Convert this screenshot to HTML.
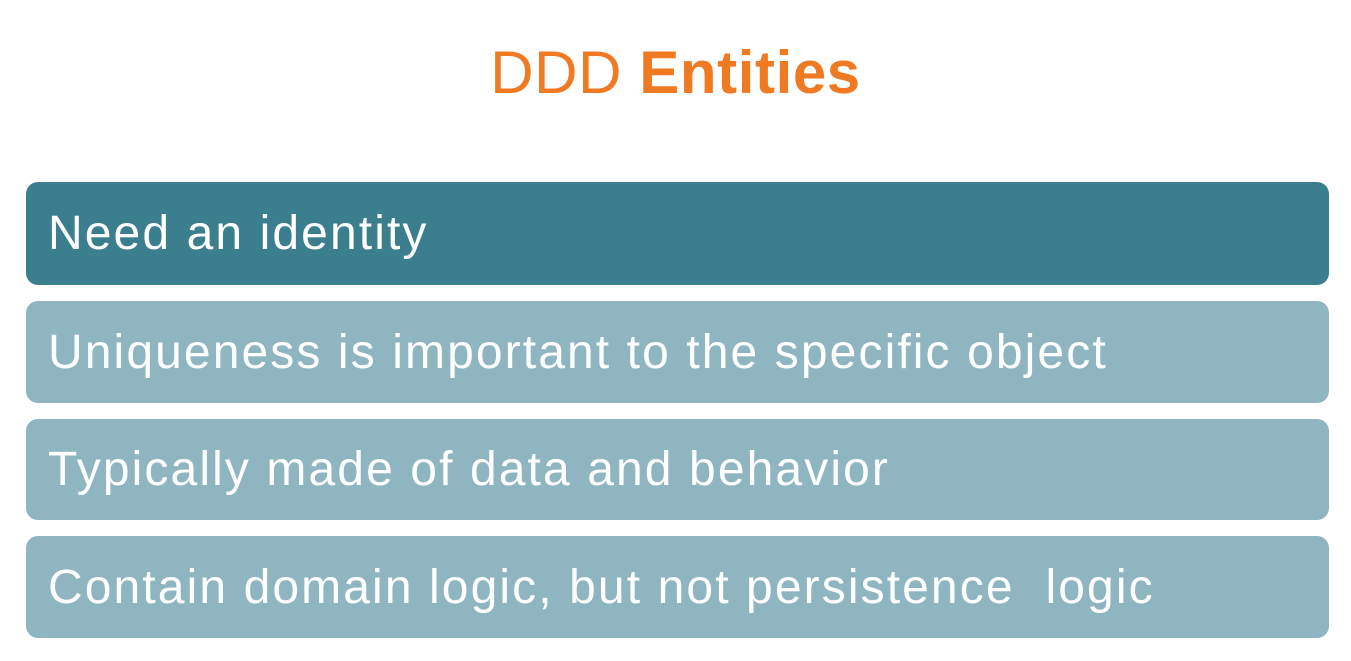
<!DOCTYPE html>
<html><head><style>
body{margin:0;width:1351px;height:661px;background:#fff;font-family:"Liberation Sans",sans-serif;overflow:hidden;position:relative}
h1{position:absolute;top:38px;left:0;width:1351px;text-align:center;margin:0;font-size:60px;font-weight:normal;color:#f07a22;letter-spacing:0.6px}
h1 b{font-weight:bold}
.r{position:absolute;left:26px;width:1303px;border-radius:12px;background:#8fb6c0;color:#fff;font-size:48px;box-sizing:border-box;padding-left:22px;display:flex;align-items:center;letter-spacing:2.1px}
.d{background:#3b7f8f}
</style></head><body>
<h1>DDD <b>Entities</b></h1>
<div class="r d" style="top:182px;height:103px">Need an identity</div>
<div class="r" style="top:301px;height:102px">Uniqueness is important to the specific object</div>
<div class="r" style="top:419px;height:101px">Typically made of data and behavior</div>
<div class="r" style="top:536px;height:102px">Contain domain logic, but not persistence&nbsp; logic</div>
</body></html>
